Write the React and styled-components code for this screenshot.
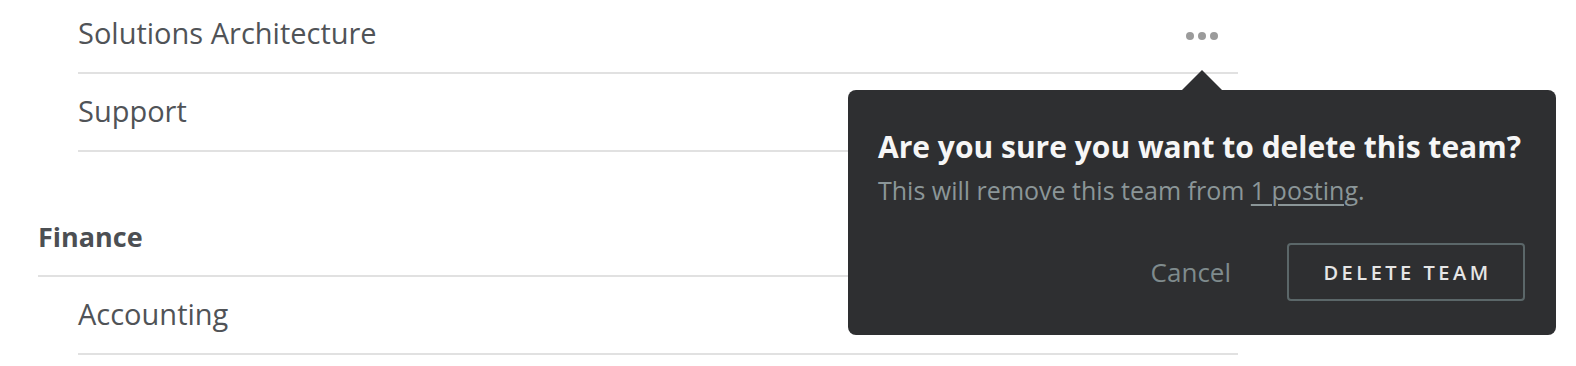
import React from 'react';
import styled, { createGlobalStyle } from 'styled-components';

const GlobalStyle = createGlobalStyle`
  html, body {
    margin: 0;
    padding: 0;
    background: #ffffff;
    overflow: hidden;
  }
  body {
    font-family: "Open Sans", "Noto Sans", sans-serif;
    color: #505357;
  }
`;

const Page = styled.div`
  width: 1200px;
  margin: -4px 0 0 38px;
`;

const Group = styled.div`
  display: flex;
  flex-direction: column;
`;

const GroupTitle = styled.div`
  margin-top: 66px;
  padding-bottom: 20px;
  font-size: 27px;
  line-height: 37px;
  font-weight: 700;
  color: #4c4f53;
  border-bottom: 2px solid #e1e1e1;
`;

const Row = styled.div`
  position: relative;
  display: flex;
  align-items: center;
  justify-content: space-between;
  height: 76px;
  margin-left: 40px;
  border-bottom: 2px solid #e1e1e1;
  font-size: 29px;
`;

const RowName = styled.span`
  margin-bottom: 4px;
  color: #505357;
`;

const MoreButton = styled.button`
  display: flex;
  align-items: center;
  justify-content: center;
  gap: 4px;
  width: 32px;
  height: 30px;
  margin: 4px 20px 0 0;
  padding: 0;
  border: none;
  background: transparent;
  cursor: pointer;
`;

const Dot = styled.span`
  width: 8px;
  height: 8px;
  border-radius: 50%;
  background: #9b9b9b;
`;

const Popover = styled.div`
  position: absolute;
  top: calc(100% + 18px);
  right: -318px;
  width: 708px;
  height: 245px;
  box-sizing: border-box;
  padding: 37px 31px 34px 30px;
  background: #2e2f31;
  border-radius: 8px;
  display: flex;
  flex-direction: column;
  z-index: 2;

  &::before {
    content: '';
    position: absolute;
    top: -20px;
    left: 334px;
    border-left: 20px solid transparent;
    border-right: 20px solid transparent;
    border-bottom: 20px solid #2e2f31;
  }
`;

const PopTitle = styled.div`
  font-size: 30px;
  line-height: 40px;
  font-weight: 700;
  color: #f6f6f6;
  white-space: nowrap;
`;

const PopText = styled.div`
  margin-top: 6px;
  font-size: 25px;
  line-height: 34px;
  color: #8b9698;

  a {
    color: #8b9698;
    text-decoration: underline;
    text-underline-offset: 4px;
    text-decoration-thickness: 2px;
  }
`;

const Actions = styled.div`
  margin-top: auto;
  display: flex;
  align-items: center;
  justify-content: flex-end;
  gap: 56px;
`;

const CancelButton = styled.button`
  padding: 0;
  border: none;
  background: transparent;
  font-family: inherit;
  font-size: 26px;
  color: #7f8b8d;
  cursor: pointer;
`;

const DangerButton = styled.button`
  width: 238px;
  height: 58px;
  padding: 0 0 0 3px;
  border: 2px solid #5b6769;
  border-radius: 4px;
  background: transparent;
  font-family: inherit;
  font-size: 20px;
  font-weight: 600;
  letter-spacing: 3.5px;
  color: #e6e6e6;
  cursor: pointer;
`;

const groups = [
  { name: null, teams: ['Solutions Architecture', 'Support'] },
  { name: 'Finance', teams: ['Accounting'] },
];

const ConfirmDelete = () => (
  <Popover>
    <PopTitle>Are you sure you want to delete this team?</PopTitle>
    <PopText>
      This will remove this team from <a href="#">1 posting</a>.
    </PopText>
    <Actions>
      <CancelButton>Cancel</CancelButton>
      <DangerButton>DELETE TEAM</DangerButton>
    </Actions>
  </Popover>
);

const App = () => {
  const openTeam = 'Solutions Architecture';

  return (
    <>
      <GlobalStyle />
      <Page>
        {groups.map((group, i) => (
          <Group key={i}>
            {group.name && <GroupTitle>{group.name}</GroupTitle>}
            {group.teams.map((team) => (
              <Row key={team}>
                <RowName>{team}</RowName>
                {team === openTeam && (
                  <>
                    <MoreButton aria-label="More">
                      <Dot />
                      <Dot />
                      <Dot />
                    </MoreButton>
                    <ConfirmDelete />
                  </>
                )}
              </Row>
            ))}
          </Group>
        ))}
      </Page>
    </>
  );
};

export default App;
